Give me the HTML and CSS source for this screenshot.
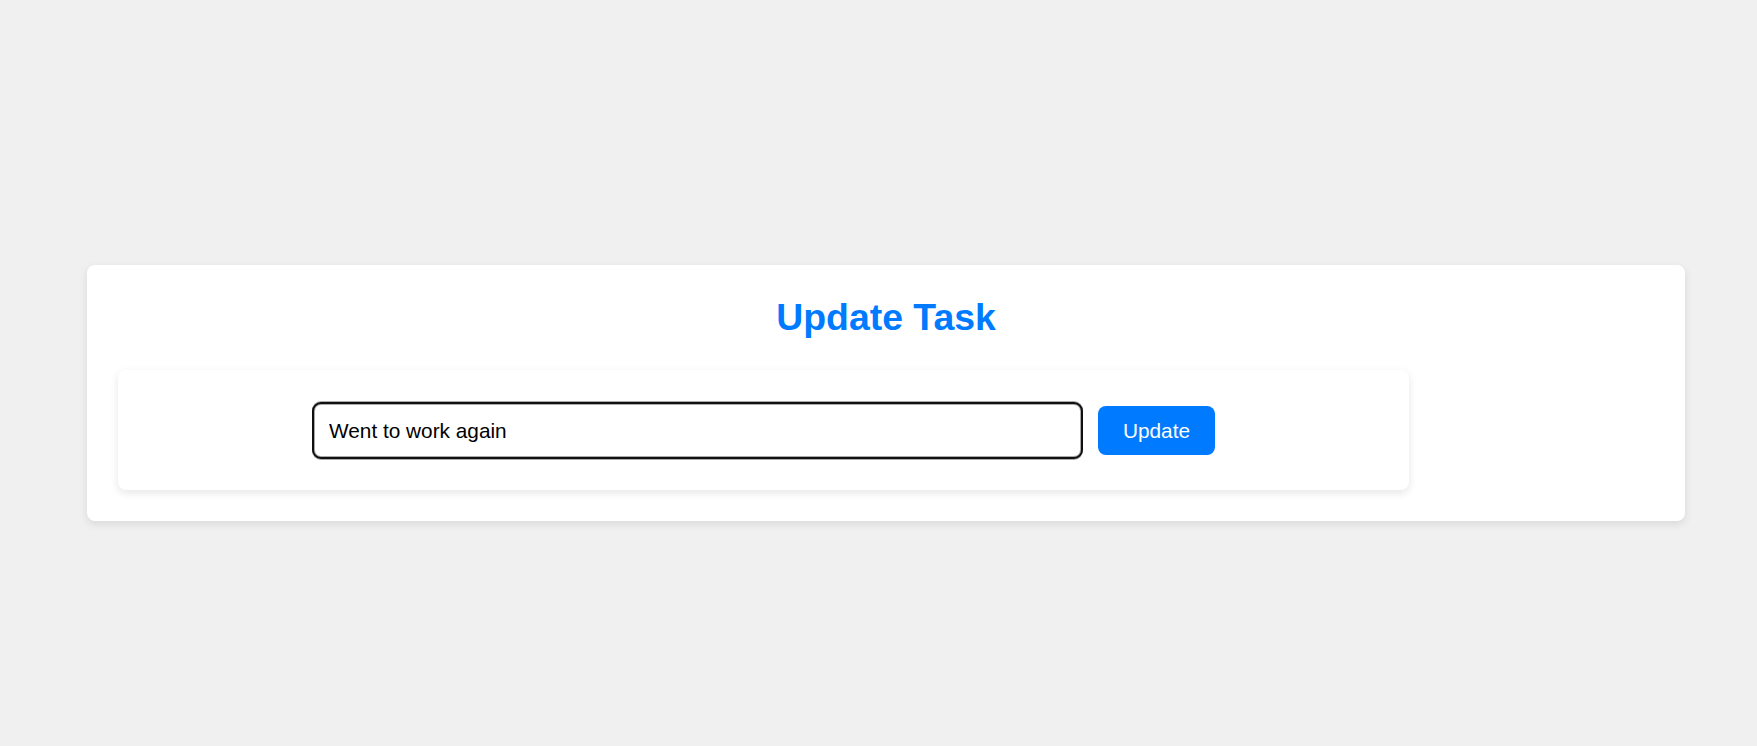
FILE: index.html
```html
<!DOCTYPE html>
<html lang="en">
<head>
<meta charset="utf-8">
<title>Update Task</title>
<link rel="stylesheet" href="styles.css">
</head>
<body>
<main class="container">
  <h1 class="title">Update Task</h1>
  <form class="task-form">
    <input class="task-input" type="text" value="Went to work again" aria-label="Task">
    <button class="update-button" type="button">Update</button>
  </form>
</main>
</body>
</html>
```

FILE: styles.css
```css
* {
  box-sizing: border-box;
}

body {
  margin: 0;
  height: 746px;
  padding: 265px 72px 0 87px;
  background: #f0f0f0;
  font-family: "Liberation Sans", Arial, sans-serif;
}

.container {
  height: 256px;
  padding: 31px;
  border-radius: 8px;
  background: #fff;
  box-shadow: 0 3px 8px rgba(0, 0, 0, 0.1);
}

.title {
  margin: 0 0 31px;
  font-size: 37.4px;
  line-height: 43px;
  text-align: center;
  color: #007bff;
}

.task-form {
  display: flex;
  align-items: center;
  justify-content: center;
  gap: 17px;
  width: 1291px;
  height: 120px;
  padding: 1px 0 0 2px;
  border-radius: 8px;
  background: #fff;
  box-shadow: 0 3px 8px rgba(0, 0, 0, 0.1);
}

.task-input {
  width: 767px;
  height: 53px;
  padding: 0 14px;
  border: 1px solid #aaa;
  border-radius: 7px;
  outline: 2px solid #101010;
  box-shadow: 0 1px 0 2px #aaa, 0 -1px 0 2px #aaa;
  background: #fff;
  color: #000;
  font: 20.8px "Liberation Sans", Arial, sans-serif;
}

.update-button {
  width: 117px;
  height: 49px;
  padding: 0;
  border: 0;
  border-radius: 8px;
  background: #007bff;
  color: #fff;
  font: 20.8px "Liberation Sans", Arial, sans-serif;
}
```
